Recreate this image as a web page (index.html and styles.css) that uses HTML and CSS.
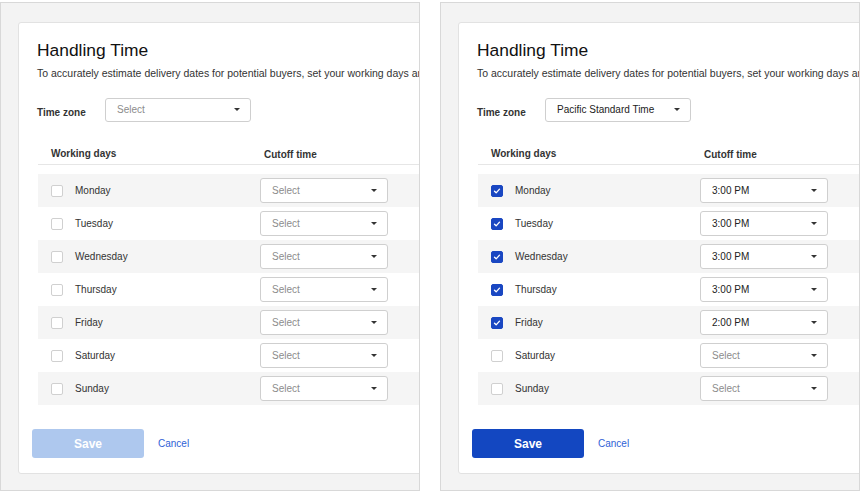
FILE: index.html
```html
<!DOCTYPE html>
<html lang="en">

<head>
    <meta charset="UTF-8">
    <meta name="viewport" content="width=device-width, initial-scale=1.0">
    <title>Handling Time</title>
    <link rel="stylesheet" href="styles.css">
</head>

<body>
    <!-- empty state -->
    <div class="panel">
        <div class="card">
            <div class="card-title">Handling Time</div>
            <div class="card-desc">To accurately estimate delivery dates for potential buyers, set your working days and cutoff times.</div>

            <div class="tz-row">
                <div class="tz-label">Time zone</div>
                <div class="select tz-select placeholder"><span>Select</span><i class="caret"></i></div>
            </div>

            <div class="days">
                <div class="days-head">
                    <div class="col-day">Working days</div>
                    <div class="col-cut">Cutoff time</div>
                </div>
                <div class="day-row">
                    <div class="col-day"><span class="check"></span>Monday</div>
                    <div class="select placeholder"><span>Select</span><i class="caret"></i></div>
                </div>
                <div class="day-row">
                    <div class="col-day"><span class="check"></span>Tuesday</div>
                    <div class="select placeholder"><span>Select</span><i class="caret"></i></div>
                </div>
                <div class="day-row">
                    <div class="col-day"><span class="check"></span>Wednesday</div>
                    <div class="select placeholder"><span>Select</span><i class="caret"></i></div>
                </div>
                <div class="day-row">
                    <div class="col-day"><span class="check"></span>Thursday</div>
                    <div class="select placeholder"><span>Select</span><i class="caret"></i></div>
                </div>
                <div class="day-row">
                    <div class="col-day"><span class="check"></span>Friday</div>
                    <div class="select placeholder"><span>Select</span><i class="caret"></i></div>
                </div>
                <div class="day-row">
                    <div class="col-day"><span class="check"></span>Saturday</div>
                    <div class="select placeholder"><span>Select</span><i class="caret"></i></div>
                </div>
                <div class="day-row">
                    <div class="col-day"><span class="check"></span>Sunday</div>
                    <div class="select placeholder"><span>Select</span><i class="caret"></i></div>
                </div>
            </div>

            <div class="actions">
                <button type="button" class="save-btn" disabled>Save</button>
                <a href="#" class="cancel-link">Cancel</a>
            </div>
        </div>
    </div>

    <!-- filled state -->
    <div class="panel">
        <div class="card">
            <div class="card-title">Handling Time</div>
            <div class="card-desc">To accurately estimate delivery dates for potential buyers, set your working days and cutoff times.</div>

            <div class="tz-row">
                <div class="tz-label">Time zone</div>
                <div class="select tz-select"><span>Pacific Standard Time</span><i class="caret"></i></div>
            </div>

            <div class="days">
                <div class="days-head">
                    <div class="col-day">Working days</div>
                    <div class="col-cut">Cutoff time</div>
                </div>
                <div class="day-row">
                    <div class="col-day"><span class="check checked"><svg viewBox="0 0 12 12"><path d="M3 6.2l2 2 4-4.4" /></svg></span>Monday</div>
                    <div class="select"><span>3:00 PM</span><i class="caret"></i></div>
                </div>
                <div class="day-row">
                    <div class="col-day"><span class="check checked"><svg viewBox="0 0 12 12"><path d="M3 6.2l2 2 4-4.4" /></svg></span>Tuesday</div>
                    <div class="select"><span>3:00 PM</span><i class="caret"></i></div>
                </div>
                <div class="day-row">
                    <div class="col-day"><span class="check checked"><svg viewBox="0 0 12 12"><path d="M3 6.2l2 2 4-4.4" /></svg></span>Wednesday</div>
                    <div class="select"><span>3:00 PM</span><i class="caret"></i></div>
                </div>
                <div class="day-row">
                    <div class="col-day"><span class="check checked"><svg viewBox="0 0 12 12"><path d="M3 6.2l2 2 4-4.4" /></svg></span>Thursday</div>
                    <div class="select"><span>3:00 PM</span><i class="caret"></i></div>
                </div>
                <div class="day-row">
                    <div class="col-day"><span class="check checked"><svg viewBox="0 0 12 12"><path d="M3 6.2l2 2 4-4.4" /></svg></span>Friday</div>
                    <div class="select"><span>2:00 PM</span><i class="caret"></i></div>
                </div>
                <div class="day-row">
                    <div class="col-day"><span class="check"></span>Saturday</div>
                    <div class="select placeholder"><span>Select</span><i class="caret"></i></div>
                </div>
                <div class="day-row">
                    <div class="col-day"><span class="check"></span>Sunday</div>
                    <div class="select placeholder"><span>Select</span><i class="caret"></i></div>
                </div>
            </div>

            <div class="actions">
                <button type="button" class="save-btn">Save</button>
                <a href="#" class="cancel-link">Cancel</a>
            </div>
        </div>
    </div>
</body>

</html>
```

FILE: styles.css
```css
body {
    margin: 0;
    padding-top: 2px;
    font-family: 'Liberation Sans', Arial, sans-serif;
    color: #222;
    background: #fff;
    display: flex;
    gap: 20px;
}

.panel {
    width: 420px;
    height: 489px;
    box-sizing: border-box;
    flex-shrink: 0;
    border: 1px solid #d8d8d8;
    background: #f3f3f3;
    overflow: hidden;
    padding: 19px 0 0 17px;
}

.card {
    width: 640px;
    height: 452px;
    box-sizing: border-box;
    background: #fff;
    border: 1px solid #e2e2e2;
    border-radius: 3px;
    padding: 17px 0 0 18px;
}

.card-title {
    font-size: 17.4px;
    line-height: 20px;
    color: #111;
}

.card-desc {
    margin-top: 6px;
    font-size: 10.5px;
    line-height: 14px;
    color: #333;
    white-space: nowrap;
}

.tz-row {
    margin-top: 18px;
    display: flex;
    align-items: flex-start;
}

.tz-label {
    width: 68px;
    padding-top: 9px;
    font-size: 10px;
    line-height: 12px;
    font-weight: 700;
    color: #333;
}

.select {
    width: 128px;
    height: 25px;
    box-sizing: border-box;
    border: 1px solid #cfcfcf;
    border-radius: 3px;
    background: #fff;
    padding: 0 10px 0 11px;
    display: flex;
    align-items: center;
    justify-content: space-between;
    font-size: 10px;
    color: #222;
}

.select.placeholder {
    color: #8c8c8c;
}

.tz-select {
    width: 146px;
    height: 24px;
    align-items: flex-start;
    padding-top: 5px;
}

.tz-select .caret {
    margin-top: 4px;
}

.caret {
    width: 0;
    height: 0;
    border-left: 3px solid transparent;
    border-right: 3px solid transparent;
    border-top: 3px solid #333;
}

.days {
    margin-left: 1px;
    margin-top: 22px;
}

.days-head {
    display: flex;
    padding-left: 13px;
    padding-top: 2px;
    padding-bottom: 2px;
    border-bottom: 1px solid #e6e6e6;
    margin-bottom: 9px;
    font-size: 10px;
    line-height: 14px;
    font-weight: 700;
    color: #333;
}

.col-day {
    width: 209px;
    display: flex;
    align-items: center;
}

.days-head .col-cut {
    margin-left: 4px;
    padding-top: 2px;
}

.day-row {
    height: 33px;
    display: flex;
    align-items: center;
    padding-left: 13px;
    font-size: 10px;
    color: #333;
}

.day-row:nth-child(even) {
    background: #f5f5f5;
}

.check {
    width: 12px;
    height: 12px;
    box-sizing: border-box;
    border: 1px solid #d0d0d0;
    border-radius: 2px;
    background: #fff;
    margin-right: 12px;
    display: flex;
}

.check.checked {
    border-color: #1a47c2;
    background: #1a47c2;
}

.check svg {
    width: 10px;
    height: 10px;
    fill: none;
    stroke: #fff;
    stroke-width: 1.6;
    stroke-linecap: round;
    stroke-linejoin: round;
}

.actions {
    margin-top: 24px;
    margin-left: -5px;
    display: flex;
    align-items: center;
    gap: 14px;
}

.save-btn {
    width: 112px;
    height: 29px;
    border: none;
    border-radius: 3px;
    background: #1347c1;
    color: #fff;
    font-family: inherit;
    font-size: 12px;
    font-weight: 700;
    cursor: pointer;
}

.save-btn:disabled {
    background: #aec8ee;
    cursor: default;
}

.cancel-link {
    font-size: 10px;
    color: #2f62d6;
    text-decoration: none;
}
```
